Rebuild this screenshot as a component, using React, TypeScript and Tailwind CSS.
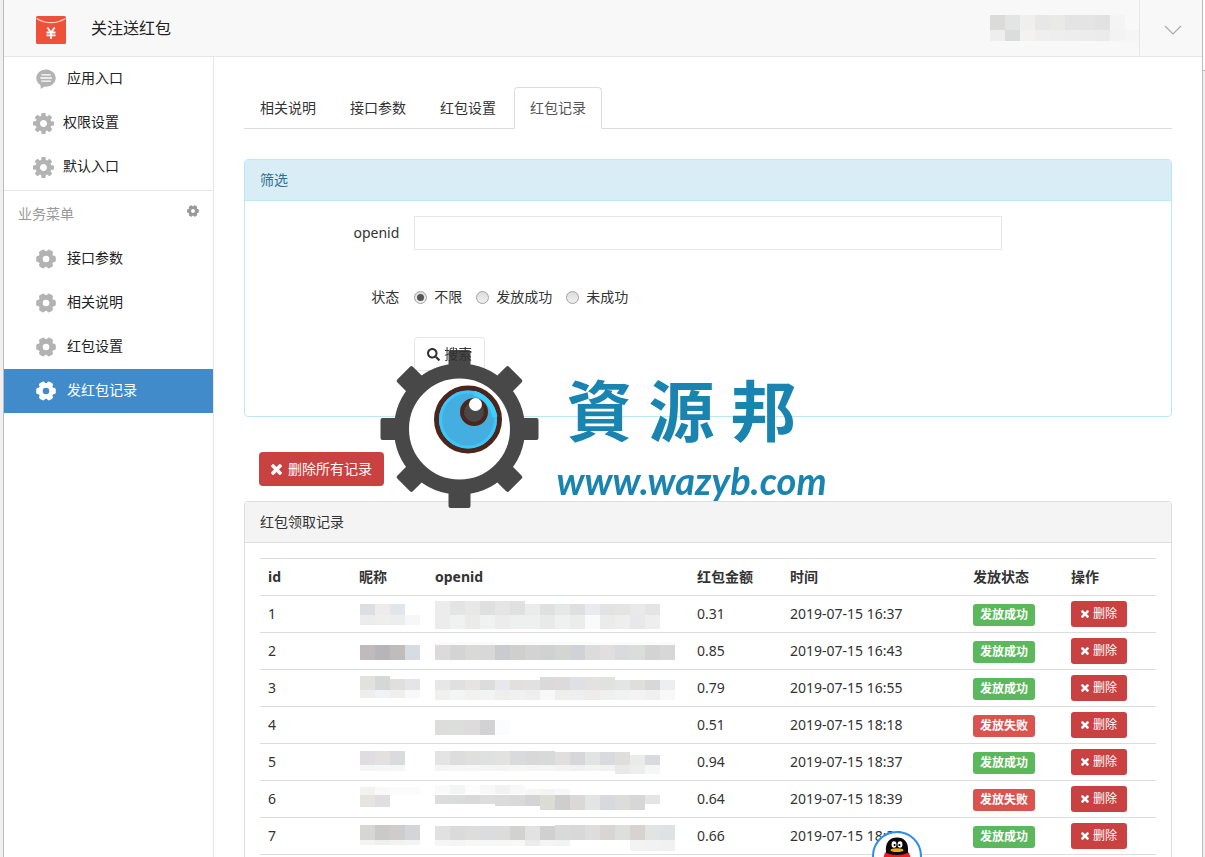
import React, { useState } from 'react'
import { FaSearch } from 'react-icons/fa'

type Strip = { x?: number; y: number; h: number; colors: string[] }

const TABS = ['相关说明', '接口参数', '红包设置', '红包记录']
const STATUS_OPTIONS = ['不限', '发放成功', '未成功']
const BUSINESS_MENU = ['接口参数', '相关说明', '红包设置', '发红包记录']

const ACCOUNT_MASK: Strip[] = [
    { y: 0, h: 15, colors: ['#dbdbd9', '#e2e5e4', '#f0efed', '#e7e7e7', '#e9e9e6', '#e4e4e4', '#e4e4e4', '#e2e2e2', '#f4f4f4'] },
    { y: 15, h: 11, colors: ['#eeeeee', '#dbdddc', '#f3f2f0', '#efefef', '#eeeeee', '#ededed', '#ececec', '#ebebeb', '#f3f3f3', '#f5f5f5'] },
]

const RECORDS: { id: number; amount: string; time: string; ok: boolean; name: Strip[]; openid: Strip[] }[] = [
    {
        id: 1, amount: '0.31', time: '2019-07-15 16:37', ok: true,
        name: [
            { y: 8, h: 11, colors: ['#dcdee0', '#edecea', '#e2e6ea'] },
            { y: 19, h: 10, colors: ['#ececec', '#eeeeec', '#ecedef', '#f7f7f7'] },
        ],
        openid: [
            { y: 5, h: 14, colors: ['#ececec', '#e4e4e4', '#e8e8e8', '#dfdfdf', '#e5e5e5', '#e0e0e0'] },
            { x: 90, y: 8, h: 11, colors: ['#ebebeb', '#e0e0e0', '#e4e8e6', '#dfdfdf', '#e8eaed', '#e2e2e2', '#e4e4e3', '#e9e9e9', '#e4e4e4'] },
            { y: 19, h: 14, colors: ['#ececec', '#f0f2f1', '#ebebea', '#f0f1f1', '#ececed', '#eef0ef', '#eef0ef', '#e9e9e9', '#eef1f0', '#ebeceb', '#fafafa', '#ebebeb', '#eeeeee', '#e8e8eb', '#eeeeee'] },
        ],
    },
    {
        id: 2, amount: '0.85', time: '2019-07-15 16:43', ok: true,
        name: [{ y: 12, h: 15, colors: ['#bfbbbd', '#b8b5b9', '#bebdbb', '#d6dce1'] }],
        openid: [
            { y: 9, h: 3, colors: Array(16).fill('#fbfbfb') },
            { y: 12, h: 15, colors: ['#dcdadb', '#d4d4d4', '#d9dad8', '#d8d8d9', '#cacbcf', '#cfcfce', '#d3d3d3', '#cfd2d0', '#d3d5d3', '#d0d2d5', '#dcdcdc', '#e0dedf', '#d8dadb', '#daddda', '#d3d3d3', '#d7d7d7'] },
        ],
    },
    {
        id: 3, amount: '0.79', time: '2019-07-15 16:55', ok: true,
        name: [
            { y: 6, h: 14, colors: ['#e1e1df', '#d5d8d6'] },
            { x: 30, y: 9, h: 11, colors: ['#e1dfde', '#e5e5e7'] },
            { y: 20, h: 8, colors: ['#eeeeed', '#f1f2f5', '#f0efee', '#f8f8f8'] },
        ],
        openid: [
            { y: 10, h: 10, colors: ['#e7e7e7', '#dfe0e0', '#e5e4e3', '#dcdcdc', '#e7e8eb', '#e2e0df', '#e1e1e1'] },
            { x: 105, y: 7, h: 13, colors: ['#dadadb', '#dddbd9', '#dfe0e5', '#e4e2e1', '#e0e2e0'] },
            { x: 180, y: 10, h: 10, colors: ['#e3e5e4', '#e0dedc', '#d8d8d8', '#edeef0'] },
            { y: 20, h: 10, colors: ['#f0f0ef', '#f3f4f4', '#f1f1f0', '#f2f3f3', '#eeeeef', '#f0f0f0', '#eeeeee', '#f8f8f9', '#eeeeec', '#eeeeef', '#edecea', '#f0f0f0', '#eff2f0', '#f3f3f3', '#f0f0f0', '#f8f8f8'] },
        ],
    },
    {
        id: 4, amount: '0.51', time: '2019-07-15 18:18', ok: false,
        name: [],
        openid: [{ y: 13, h: 15, colors: ['#dddddb', '#dbdedb', '#dedbdd', '#d2d2d4', '#fbfcfe'] }],
    },
    {
        id: 5, amount: '0.94', time: '2019-07-15 18:37', ok: true,
        name: [
            { y: 7, h: 14, colors: ['#dfdde0', '#e2e0e1', '#d9dbdd'] },
            { y: 21, h: 6, colors: ['#f5f5f5', '#f6f7f6', '#f5f6f6'] },
        ],
        openid: [
            { y: 7, h: 14, colors: ['#e4e4e4', '#dddddd', '#dfdfde', '#dfe1e0', '#e2e2e0', '#d9dadc', '#d8d8d9', '#d8dad9'] },
            { x: 120, y: 8, h: 13, colors: ['#e1dfde', '#d7d7da', '#e1e4e3', '#d8dadd', '#e0dedc'] },
            { x: 195, y: 11, h: 10, colors: ['#e9ecea', '#d9dadd'] },
            { y: 21, h: 6, colors: ['#f4f5f5', '#f6f6f6', '#f7f7f7', '#f5f5f5', '#f4f4f4', '#f6f6f5', '#f5f5f5', '#f4f5f5', '#f3f3f3', '#f1f1f1', '#f3f4f4', '#f2f2f2'] },
            { x: 180, y: 21, h: 9, colors: ['#e8e8e8', '#ededed', '#f5f7f6'] },
        ],
    },
    {
        id: 6, amount: '0.64', time: '2019-07-15 18:39', ok: false,
        name: [
            { y: 6, h: 8, colors: ['#f2f2ef', '#f8f9f8', '#fbfbfb', '#fbfbfb'] },
            { y: 14, h: 12, colors: ['#e5e4e1', '#dfdfe2'] },
        ],
        openid: [
            { y: 4, h: 9, colors: ['#fafafa', '#f4f4f4', '#fdfdfd', '#f8f8f8', '#f2f2f2', '#f8f8f8'] },
            { x: 90, y: 8, h: 6, colors: ['#f7f7f7', '#f4f4f4', '#f7f8f7'] },
            { y: 14, h: 9, colors: ['#dcdcdd', '#dadbdb', '#d8d9d8', '#dddddd'] },
            { x: 60, y: 14, h: 11, colors: ['#dbdbdc', '#d9d9d9', '#d4d4d4'] },
            { x: 105, y: 14, h: 15, colors: ['#dbdcd6', '#cecece', '#dbd9d8', '#e3e5e4', '#d8d9dd', '#dcdcda', '#d7d7d7'] },
            { x: 210, y: 14, h: 9, colors: ['#e4e4e4'] },
        ],
    },
    {
        id: 7, amount: '0.66', time: '2019-07-15 18:39', ok: true,
        name: [
            { y: 7, h: 15, colors: ['#d6d6d4', '#cacac8', '#cfcdcb', '#d4d5d7'] },
            { y: 22, h: 5, colors: ['#f4f4f4', '#efefef', '#f2f2f2', '#f4f4f4'] },
        ],
        openid: [
            { y: 8, h: 14, colors: ['#e1e1e1', '#dadadb', '#dddedc', '#dbdcde', '#dcdcdd', '#d2d2d1', '#e2e2e2', '#d0d0d0'] },
            { x: 120, y: 7, h: 15, colors: ['#d8d9d9', '#d8d8d9', '#dddddd', '#d7d6d4', '#dcdfdc', '#d6d3d1', '#e0e4e3', '#dfe2e2'] },
            { y: 22, h: 6, colors: ['#f6f6f6', '#f4f4f4', '#f7f7f6', '#f6f7f7', '#f7f7f5', '#f8f8f8', '#ebebeb', '#f4f4f4', '#f3f3f3'] },
            { x: 195, y: 22, h: 11, colors: ['#f3f3f3', '#f2f2f2', '#f0f1f1'] },
        ],
    },
]

// Pixelated block that hides private data
function Mosaic({ strips, width, height }: { strips: Strip[]; width: number; height: number }) {
    return (
        <svg width={width} height={height} shapeRendering="crispEdges" className="block" aria-hidden="true">
            {strips.map((s, i) =>
                s.colors.map((color, j) => (
                    <rect key={`${i}-${j}`} x={(s.x ?? 0) + j * 15} y={s.y} width={15} height={s.h} fill={color} />
                ))
            )}
        </svg>
    )
}

function CogIcon({ className }: { className?: string }) {
    return (
        <svg viewBox="128 128 1536 1536" fill="currentColor" className={className} aria-hidden="true">
            <path d="M1152 896q0-106-75-181t-181-75-181 75-75 181 75 181 181 75 181-75 75-181zm512-109v222q0 12-8 23t-20 13l-185 28q-19 54-39 91 35 50 107 138 10 12 10 25t-9 23q-27 37-99 108t-94 71q-12 0-26-9l-138-108q-44 23-91 38-16 136-29 186-7 28-36 28h-222q-14 0-24.5-8.5t-11.5-21.5l-28-184q-49-16-90-37l-141 107q-10 9-25 9-14 0-25-11-126-114-165-168-7-10-7-23 0-12 8-23 15-21 51-66.5t54-70.5q-27-50-41-99l-183-27q-13-2-21-12.5t-8-23.5v-222q0-12 8-23t19-13l186-28q14-46 39-92-40-57-107-138-10-12-10-24 0-10 9-23 26-36 98.5-107.5t94.5-71.5q13 0 26 10l138 107q44-23 91-38 16-136 29-186 7-28 36-28h222q14 0 24.5 8.5t11.5 21.5l28 184q49 16 90 37l142-107q9-9 24-9 13 0 25 10 129 119 165 170 7 8 7 22 0 12-8 23-15 21-51 66.5t-54 70.5q26 50 41 98l183 28q13 2 21 12.5t8 23.5z" />
        </svg>
    )
}

// Six rounded teeth
function FlowerCogIcon({ className }: { className?: string }) {
    return (
        <svg viewBox="0 0 20 20" fill="currentColor" className={className} aria-hidden="true">
            <circle cx="10" cy="10" r="5.6" fill="none" stroke="currentColor" strokeWidth="4.6" />
            {[0, 60, 120, 180, 240, 300].map((angle) => (
                <rect key={angle} x="14" y="6.8" width="5.8" height="6.4" rx="2" transform={`rotate(${angle} 10 10)`} />
            ))}
        </svg>
    )
}

function CommentIcon({ className }: { className?: string }) {
    return (
        <svg viewBox="0 0 20 20" className={className} aria-hidden="true">
            <path d="M10 0.5C4.6 0.5 0.3 4.3 0.3 9.1c0 3 1.6 5.5 4.2 7.1L4.8 20l4-2.4 1.2.1c5.4 0 9.7-3.8 9.7-8.6S15.4 0.5 10 0.5z" fill="#b3b3b3" />
            <path d="M5.8 5.8h8.6M4.8 9h10.6M5.8 12.2h8.6" stroke="#fff" strokeWidth="1.3" strokeLinecap="round" />
        </svg>
    )
}

function TimesIcon({ className }: { className?: string }) {
    return (
        <svg viewBox="110 366 1188 1188" fill="currentColor" className={className} aria-hidden="true">
            <path d="M1298 1322q0 40-28 68l-136 136q-28 28-68 28t-68-28l-294-294-294 294q-28 28-68 28t-68-28l-136-136q-28-28-28-68t28-68l294-294-294-294q-28-28-28-68t28-68l136-136q28-28 68-28t68 28l294 294 294-294q28-28 68-28t68 28l136 136q28 28 28 68t-28 68l-294 294 294 294q28 28 28 68z" />
        </svg>
    )
}

function RedPacketIcon() {
    return (
        <svg width="30" height="32" viewBox="0 -4 30 32" aria-hidden="true">
            <rect width="30" height="28" rx="1.5" fill="#ee5038" />
            <path d="M0.5 2.4Q15 11 29.5 2.4" fill="none" stroke="#fbd5cd" strokeWidth="1.2" />
            <path d="M11.3 11.5l3.7 5 3.7-5M10.5 16.5h9M10.5 19.3h9M15 16v7" fill="none" stroke="#fff" strokeWidth="1.8" />
        </svg>
    )
}

function WatermarkLogo() {
    return (
        <svg width="160" height="158" viewBox="0 0 160 158" className="shrink-0" aria-hidden="true">
            <circle cx="80.5" cy="79" r="58" fill="#fff" stroke="#484848" strokeWidth="15" />
            {[0, 45, 90, 135, 180, 225, 270, 315].map((angle) => (
                <rect key={angle} x="69.5" y="0" width="22" height="20" rx="2" fill="#484848" transform={`rotate(${angle} 80.5 79)`} />
            ))}
            <circle cx="89" cy="69.5" r="31.5" fill="#45aee0" stroke="#4b261c" strokeWidth="5" />
            <circle cx="89" cy="69.5" r="27.5" fill="none" stroke="#3cc6fb" strokeWidth="3" />
            <path d="M95 43Q112 49 116 67" fill="none" stroke="#3cd0ff" strokeWidth="5" />
            <circle cx="95" cy="62" r="12" fill="#484848" stroke="#4b261c" strokeWidth="4" />
            <circle cx="96.5" cy="54.5" r="6.5" fill="#fff" />
        </svg>
    )
}

function Watermark() {
    return (
        <div className="pointer-events-none fixed inset-0 z-20 flex items-center justify-center">
            <WatermarkLogo />
            <div className="ml-[18px] w-[270px] pt-4 text-[#1a84b0]">
                <div className="flex gap-4 pl-2.5 text-[66px] leading-[80px] font-bold">
                    <span>資</span>
                    <span>源</span>
                    <span>邦</span>
                </div>
                <div className="pt-1.5 font-['Lato'] text-[38px] leading-[48px] font-bold whitespace-nowrap italic">www.wazyb.com</div>
            </div>
        </div>
    )
}

function QQBadge() {
    return (
        <button aria-label="QQ" className="fixed right-[283px] -bottom-6 z-30 size-[50px] overflow-hidden rounded-full border-2 border-[#2f8cf0] bg-white">
            <svg width="46" height="46" viewBox="0 0 46 46" aria-hidden="true">
                <path d="M12 19C11 9 16 4.5 23 4.5S35 9 34 19l3 12H9z" fill="#0a0a0a" />
                <path d="M11 19.5Q23 24.5 35 19.5L37 26H9z" fill="#ee1c25" />
                <ellipse cx="20" cy="11.5" rx="2.4" ry="3.2" fill="#fff" />
                <ellipse cx="26" cy="11.5" rx="2.4" ry="3.2" fill="#fff" />
                <circle cx="20.6" cy="12" r="1.1" fill="#000" />
                <circle cx="25.4" cy="12" r="1.1" fill="#000" />
                <ellipse cx="23" cy="17.2" rx="6.5" ry="1.9" fill="#f8a912" />
            </svg>
        </button>
    )
}

function Sidebar() {
    return (
        <nav className="w-[210px] shrink-0 border-r border-[#e7e7eb] text-[#222]">
            <div className="border-b border-[#e7e7eb] pb-px">
                <a href="#entry" className="flex h-11 items-center gap-[11px] pl-8">
                    <CommentIcon className="size-5" />
                    <span className="pb-0.5">应用入口</span>
                </a>
                <a href="#permission" className="flex h-11 items-center gap-[9px] pl-[29px]">
                    <CogIcon className="size-[21px] text-[#b3b3b3]" />
                    <span className="pb-0.5">权限设置</span>
                </a>
                <a href="#default" className="flex h-11 items-center gap-[9px] pl-[29px]">
                    <CogIcon className="size-[21px] text-[#b3b3b3]" />
                    <span className="pb-0.5">默认入口</span>
                </a>
            </div>
            <div className="flex h-[46px] items-center justify-between px-3.5 text-[#999]">
                业务菜单
                <button aria-label="菜单设置" className="pb-1.5">
                    <FlowerCogIcon className="size-3" />
                </button>
            </div>
            {BUSINESS_MENU.map((item) => {
                const active = item === '发红包记录'
                return (
                    <a
                        key={item}
                        href="#menu"
                        className={`flex h-11 items-center gap-[11px] pl-8 ${active ? 'bg-[#428bca] text-white' : ''}`}
                    >
                        <FlowerCogIcon className={active ? 'size-5 text-white' : 'size-5 text-[#b3b3b3]'} />
                        <span className="pb-0.5">{item}</span>
                    </a>
                )
            })}
        </nav>
    )
}

function FilterPanel() {
    const [status, setStatus] = useState('不限')

    return (
        <section className="mt-[30px] rounded border border-[#bce8f1]">
            <h2 className="border-b border-[#bce8f1] bg-[#d9edf7] px-[15px] py-2.5 text-[#31708f]">筛选</h2>
            <form className="space-y-[30px] pt-[15px] pb-[45px]" onSubmit={(e) => e.preventDefault()}>
                <div className="grid grid-cols-12">
                    <label htmlFor="openid" className="col-span-2 pt-[7px] text-right">openid</label>
                    <div className="col-span-8 px-[15px]">
                        <input id="openid" type="text" className="block h-[34px] w-full border border-[#e7e7eb] px-3 outline-none" />
                    </div>
                </div>
                <div className="grid grid-cols-12 pt-[7px]">
                    <span className="col-span-2 text-right">状态</span>
                    <div className="col-span-8 flex gap-3.5 px-[15px]">
                        {STATUS_OPTIONS.map((option) => (
                            <label key={option} className="flex items-center gap-[7px]">
                                <input
                                    type="radio"
                                    name="status"
                                    checked={status === option}
                                    onChange={() => setStatus(option)}
                                    className="flex size-[13px] appearance-none items-center justify-center rounded-full border border-[#a3a3a3] bg-linear-to-b from-[#dcdcdc] to-[#f0f0f0] checked:before:size-[7px] checked:before:rounded-full checked:before:bg-[#555] checked:before:content-['']"
                                />
                                {option}
                            </label>
                        ))}
                    </div>
                </div>
                <div className="grid grid-cols-12">
                    <div className="col-span-8 col-start-3 px-[15px]">
                        <button type="submit" className="flex h-[34px] items-center gap-1 rounded border border-[#e7e7eb] bg-white px-3">
                            <FaSearch size={13} />
                            {/* label stays readable above the watermark */}
                            <span className="relative z-30">搜索</span>
                        </button>
                    </div>
                </div>
            </form>
        </section>
    )
}

function RecordTable() {
    return (
        <section className="flex-1 rounded-t border border-b-0 border-[#ddd]">
            <h2 className="border-b border-[#ddd] bg-[#f4f4f4] px-[15px] py-2.5">红包领取记录</h2>
            <div className="px-[15px] pt-[15px]">
                <table className="w-full table-fixed border-b border-[#ddd] text-left">
                    <colgroup>
                        <col className="w-[91px]" />
                        <col className="w-[76px]" />
                        <col />
                        <col className="w-[93px]" />
                        <col className="w-[183px]" />
                        <col className="w-[98px]" />
                        <col className="w-[93px]" />
                    </colgroup>
                    <thead>
                        <tr className="h-[37px] border-t border-[#ddd]">
                            {['id', '昵称', 'openid', '红包金额', '时间', '发放状态', '操作'].map((h) => (
                                <th key={h} className="px-2 font-bold">{h}</th>
                            ))}
                        </tr>
                    </thead>
                    <tbody>
                        {RECORDS.map((r) => (
                            <tr key={r.id} className="h-[37px] border-t border-[#ddd]">
                                <td className="px-2">{r.id}</td>
                                <td className="pl-[9px]"><Mosaic strips={r.name} width={60} height={36} /></td>
                                <td className="pl-2"><Mosaic strips={r.openid} width={240} height={36} /></td>
                                <td className="px-2">{r.amount}</td>
                                <td className="px-2 whitespace-nowrap">{r.time}</td>
                                <td className="px-2 pt-0.5">
                                    <span className={`block h-[22px] w-[62px] rounded-[3px] text-center text-xs leading-[22px] font-bold text-white ${r.ok ? 'bg-[#5cb85c]' : 'bg-[#d9534f]'}`}>
                                        {r.ok ? '发放成功' : '发放失败'}
                                    </span>
                                </td>
                                <td className="px-2">
                                    <button className="flex h-[26px] w-14 items-center justify-center gap-1 rounded-[3px] bg-[#c94141] text-xs text-white">
                                        <TimesIcon className="size-2" />
                                        删除
                                    </button>
                                </td>
                            </tr>
                        ))}
                    </tbody>
                </table>
            </div>
        </section>
    )
}

export default function App() {
    const [tab, setTab] = useState('红包记录')

    return (
        <div className="flex min-h-screen bg-[#f0f0f0] font-['Noto_Sans','Noto_Sans_CJK_SC',sans-serif] text-[14px] leading-5 text-[#333]">
            <div className="ml-[3px] flex min-w-0 flex-1 flex-col border-x border-[#bbb] bg-white">
                <header className="flex h-[57px] shrink-0 items-center border-b border-[#e7e7eb] bg-[#f8f8f8] pl-8">
                    <RedPacketIcon />
                    <h1 className="ml-[25px] text-base text-[#222]">关注送红包</h1>
                    <div className="ml-auto">
                        <Mosaic strips={ACCOUNT_MASK} width={149} height={26} />
                    </div>
                    <button aria-label="展开" className="flex h-full w-[63px] items-center justify-center border-l border-[#e7e7eb] pt-1 pl-1 text-[#aaa]">
                        <svg width="18" height="10" viewBox="0 0 18 10" fill="none" stroke="currentColor" strokeWidth="1.2" aria-hidden="true">
                            <path d="M1 1l8 8 8-8" />
                        </svg>
                    </button>
                </header>

                <div className="flex flex-1">
                    <Sidebar />
                    <main className="flex min-w-0 flex-1 flex-col px-[30px] pt-[30px]">
                        {/* Tabs */}
                        <div className="flex gap-0.5 border-b border-[#ddd]">
                            {TABS.map((item) => (
                                <button
                                    key={item}
                                    onClick={() => setTab(item)}
                                    className={`-mb-px h-[42px] rounded-t border px-[15px] ${tab === item
                                        ? 'border-[#ddd] border-b-white bg-white text-[#555]'
                                        : 'border-transparent'
                                        }`}
                                >
                                    {item}
                                </button>
                            ))}
                        </div>

                        <FilterPanel />

                        <div className="px-[15px] pt-[35px] pb-[15px]">
                            <button className="flex h-[34px] items-center gap-1.5 rounded bg-[#c94141] px-3 text-white">
                                <TimesIcon className="size-[11px]" />
                                删除所有记录
                            </button>
                        </div>

                        <RecordTable />
                    </main>
                </div>
            </div>
            {/* Window edge */}
            <div className="w-0.5 shrink-0">
                <div className="h-[71px] border-b border-[#bbb] bg-white" />
            </div>

            <Watermark />
            <QQBadge />
        </div>
    )
}
